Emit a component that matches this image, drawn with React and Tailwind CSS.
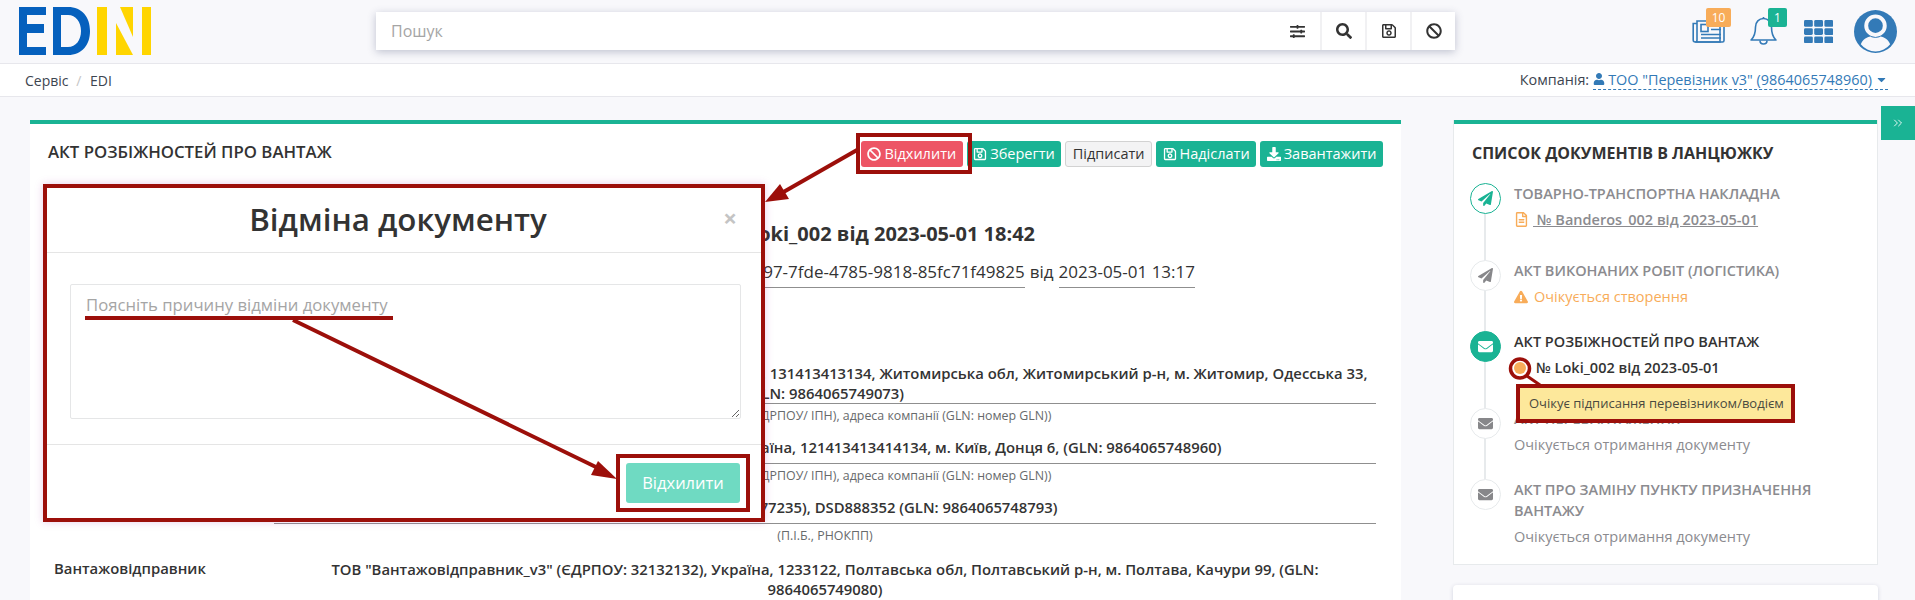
import React from 'react';
import { ChevronsRight } from 'lucide-react';
import {
  FaBan,
  FaCaretDown,
  FaDownload,
  FaEnvelope,
  FaExclamationTriangle,
  FaPaperPlane,
  FaRegFileAlt,
  FaRegSave,
  FaSearch,
  FaSlidersH,
  FaUser,
} from 'react-icons/fa';

const font = { fontFamily: '"Open Sans", sans-serif' };

function Logo() {
  return (
    <svg width="132" height="48" viewBox="0 0 132 48" className="ml-[19px] mt-[7px] shrink-0">
      <path d="M0 0H27V8H8V17H25V26H8V40H27V48H0Z" fill="#0560bd" />
      <path d="M34 0H49C63 0 71 10 71 24C71 38 63 48 49 48H34ZM42 8V40H49C57 40 62 33 62 24C62 15 57 8 49 8Z" fill="#0560bd" />
      <path d="M78 0H88V48H78Z" fill="#ffd500" />
      <path d="M101 0H114V30Z" fill="#ffd500" />
      <path d="M97 16L114 48H97Z" fill="#ffd500" />
      <path d="M123 0H132V48H123Z" fill="#ffd500" />
    </svg>
  );
}

function NewsIcon() {
  return (
    <svg width="33" height="23" viewBox="0 0 33 23" fill="none" stroke="#337ab7" strokeWidth="1.6">
      <path d="M5 3.5H1.2V20C1.2 21.2 2 22 3.2 22H30.5C31.4 22 32 21.4 32 20.5V3.5" />
      <path d="M5 1H28V22H3.2C4.4 22 5 21 5 20Z" />
      <rect x="9" y="4.5" width="7" height="7" />
      <path d="M19 6H29M19 9.5H29M9 14.5H29M9 18H29" />
    </svg>
  );
}

function BellIcon() {
  return (
    <svg width="27" height="29" viewBox="0 0 27 29" fill="none" stroke="#337ab7" strokeWidth="1.6">
      <path d="M1 24C3 22 5.5 20 5.5 11C5.5 6 9 2.5 13.5 2.5C18 2.5 21.5 6 21.5 11C21.5 20 24 22 26 24Z" strokeLinejoin="round" />
      <path d="M13.5 2.5V1" />
      <path d="M10 24.5C10 27 11.5 28 13.5 28C15.5 28 17 27 17 24.5" />
    </svg>
  );
}

function AppsIcon() {
  const cells = [];
  for (let y = 0; y < 3; y++) {
    for (let x = 0; x < 3; x++) {
      cells.push(<rect key={`${x}-${y}`} x={x * 10.2} y={y * 8.2} width="8.8" height="6.8" rx="1.4" fill="#337ab7" />);
    }
  }
  return (
    <svg width="29" height="23" viewBox="0 0 29 23" className="ml-[27px] mt-[20px]">
      {cells}
    </svg>
  );
}

function Avatar() {
  return (
    <svg width="43" height="43" viewBox="0 0 44 44" className="ml-[21px] mt-[10px]">
      <circle cx="22" cy="22" r="22" fill="#337ab7" />
      <circle cx="22" cy="16" r="9.5" fill="#337ab7" stroke="#f8f8fb" strokeWidth="4" />
      <path d="M7 35C9 30 13 27.5 17 27C20 29 24 29 27 27C31 27.5 35 30 37 35A19 19 0 0 1 7 35Z" fill="#f8f8fb" />
    </svg>
  );
}

function SearchBtn({ children }) {
  return <div className="flex w-[45px] items-center justify-center border-l-2 border-[#f1f1f3] text-[16px] text-[#333]">{children}</div>;
}

function Header() {
  return (
    <div className="flex h-[64px] border-b border-[#e7e7ec] bg-[#f8f8fb]">
      <Logo />
      <div className="ml-[225px] mt-[12px] flex h-[38px] w-[1079px] bg-white shadow-[0_2px_8px_rgba(60,70,110,0.3)]">
        <div className="flex-1 pl-[15px] text-[16px] leading-[38px] text-[#a5a5a5]">Пошук</div>
        <div className="flex w-[46px] items-center justify-center text-[15px] text-[#333]"><FaSlidersH /></div>
        <SearchBtn><FaSearch /></SearchBtn>
        <SearchBtn><FaRegSave /></SearchBtn>
        <SearchBtn><FaBan /></SearchBtn>
      </div>
      <div className="relative ml-[237px] mt-[20px] h-[23px]">
        <NewsIcon />
        <span className="absolute left-[14px] top-[-12px] h-[19px] w-[25px] rounded-[2px] bg-[#f8ac59] text-center text-[12px] leading-[19px] text-white">10</span>
      </div>
      <div className="relative ml-[25px] mt-[16px] h-[29px]">
        <BellIcon />
        <span className="absolute left-[18px] top-[-8px] h-[19px] w-[19px] rounded-[2px] bg-[#1ab394] text-center text-[12px] leading-[19px] text-white">1</span>
      </div>
      <AppsIcon />
      <Avatar />
    </div>
  );
}

function Breadcrumb() {
  return (
    <div className="flex h-[33px] items-center justify-between border-b border-[#e7e7ec] bg-white pl-[25px] pr-[27px] text-[14px] text-[#3d4550]">
      <div>
        Сервіс <span className="mx-[4px] text-[#c5c5c5]">/</span> <span className="ml-[1px]">EDI</span>
      </div>
      <div className="flex items-center gap-[4px] text-[14.4px]">
        <span>Компанія:</span>
        <span className="flex items-center border-b border-dashed border-[#337ab7] leading-[19px] text-[#337ab7]">
          <FaUser className="mr-[3px] text-[12px]" />
          ТОО "Перевізник v3" (9864065748960)
          <FaCaretDown className="ml-[3px] text-[13px]" />
        </span>
      </div>
    </div>
  );
}

function DocBtn({ icon, color, children }) {
  return (
    <button className={`flex h-[26px] items-center gap-[3px] rounded-[3px] px-[6.5px] text-[14.5px] ${color}`}>
      {icon}
      {children}
    </button>
  );
}

function PartyRow({ label, value, hint, className = '' }) {
  return (
    <div className={`flex text-[14.85px] ${className}`}>
      <div className="mt-[-1px] w-[220px] shrink-0 font-semibold leading-[20px] text-[#333]">{label}</div>
      <div className="w-[1102px]">
        <div className={`min-h-[27px] px-[6px] text-center font-semibold leading-[20px] text-[#333] ${hint ? 'border-b border-[#8f8f8f]' : ''}`}>{value}</div>
        {hint && <div className="mb-[12px] pt-[3px] text-center text-[12.4px] leading-[18px] text-[#676a6c]">{hint}</div>}
      </div>
    </div>
  );
}

function DocCard() {
  return (
    <div className="h-[500px] w-[1371px] shrink-0 overflow-hidden border-t-[4px] border-[#1ab394] bg-white">
      <div className="flex justify-between px-[18px] pt-[17px]">
        <div className="text-[16.8px] font-semibold leading-[22px] text-[#333]">АКТ РОЗБІЖНОСТЕЙ ПРО ВАНТАЖ</div>
        <div className="flex gap-[4px]">
          <DocBtn color="bg-[#ed5565] text-white" icon={<FaBan className="text-[14px]" />}>Відхилити</DocBtn>
          <DocBtn color="bg-[#1ab394] text-white" icon={<FaRegSave className="text-[14px]" />}>Зберегти</DocBtn>
          <DocBtn color="border border-[#d2d2d2] bg-[#f3f3f4] text-[#333]">Підписати</DocBtn>
          <DocBtn color="bg-[#1ab394] text-white" icon={<FaRegSave className="text-[14px]" />}>Надіслати</DocBtn>
          <DocBtn color="bg-[#1ab394] text-white" icon={<FaDownload className="text-[14px]" />}>Завантажити</DocBtn>
        </div>
      </div>
      <div className="mt-[53px] flex justify-end whitespace-nowrap pr-[366px] text-[20px] font-bold leading-[28px] text-[#333]">
        АКТ РОЗБІЖНОСТЕЙ ПРО ВАНТАЖ № Loki_002 від 2023-05-01 18:42
      </div>
      <div className="mt-[11px] flex justify-end whitespace-nowrap pr-[206px] text-[17px] leading-[26px] text-[#333]">
        <span className="border-b border-[#8f8f8f] pb-[2px]">до договору № 5b0e3c97-7fde-4785-9818-85fc71f49825</span>
        <span className="mx-[5px]">від</span>
        <span className="border-b border-[#8f8f8f] pb-[2px]">2023-05-01 13:17</span>
      </div>
      <div className="mt-[75px] pl-[24px]">
        <PartyRow
          label="Перевізник"
          value={
            <>
              ТОВ "Замовник-Експедитор_v3" (ЄДРПОУ: 31313131313), Україна, 131413413134, Житомирська обл, Житомирський р-н, м. Житомир, Одесська 33,
              <br />
              (GLN: 9864065749073)
            </>
          }
          hint="(найменування компанії (ЄДРПОУ/ ІПН), адреса компанії (GLN: номер GLN))"
        />
        <PartyRow
          label="Замовник"
          value={'ТОО "Перевізник v3" (ЄДРПОУ: 1214134), Україна, 121413413414134, м. Київ, Донця 6, (GLN: 9864065748960)'}
          hint="(найменування компанії (ЄДРПОУ/ ІПН), адреса компанії (GLN: номер GLN))"
        />
        <PartyRow
          label="Водій"
          value="Водій Тестовий (2877777235), DSD888352 (GLN: 9864065748793)"
          hint="(П.І.Б., РНОКПП)"
        />
        <PartyRow
          className="mt-[2px]"
          label="Вантажовідправник"
          value={'ТОВ "Вантажовідправник_v3" (ЄДРПОУ: 32132132), Україна, 1233122, Полтавська обл, Полтавський р-н, м. Полтава, Качури 99, (GLN: 9864065749080)'}
        />
      </div>
    </div>
  );
}

function ChainItem({ icon, tone, pb, last, children }) {
  const circle = {
    active: 'bg-[#1ab394] text-white border-[#1ab394]',
    done: 'bg-white text-[#1ab394] border-[#1ab394]',
    idle: 'bg-white text-[#87878a] border-[#e7eaec]',
  }[tone];
  return (
    <div className={`relative flex ${pb}`}>
      {!last && <div className="absolute bottom-0 left-[14px] top-0 w-[2px] bg-[#e7eaec]" />}
      <div className={`relative flex h-[31px] w-[31px] shrink-0 items-center justify-center rounded-full border text-[15px] ${circle}`}>{icon}</div>
      <div className="ml-[13px] leading-[21px]">{children}</div>
    </div>
  );
}

function ChainTitle({ dark, children }) {
  return <div className={`font-semibold ${dark ? 'text-[#333]' : 'text-[#8b8b8f]'}`}>{children}</div>;
}

function ChainCard() {
  return (
    <div className="w-[425px] shrink-0">
      <div className="h-[445px] border border-t-0 border-[#e7eaec] bg-white">
        <div className="h-[4px] bg-[#1ab394]" />
        <div className="pl-[18px] pt-[18px] text-[16px] font-bold leading-[22px] text-[#333]">СПИСОК ДОКУМЕНТІВ В ЛАНЦЮЖКУ</div>
        <div className="pl-[16px] pr-[20px] pt-[19px] text-[14.5px]">
          <ChainItem tone="done" pb="pb-[30px]" icon={<FaPaperPlane />}>
            <ChainTitle>ТОВАРНО-ТРАНСПОРТНА НАКЛАДНА</ChainTitle>
            <div className="mt-[5px] flex items-center font-semibold text-[#8b8b8f]">
              <FaRegFileAlt className="mr-[4px] text-[15px] text-[#f8ac59]" />
              <span className="underline">&nbsp;№ Banderos_002 від 2023-05-01</span>
            </div>
          </ChainItem>
          <ChainItem tone="idle" pb="pb-[24px]" icon={<FaPaperPlane />}>
            <ChainTitle>АКТ ВИКОНАНИХ РОБІТ (ЛОГІСТИКА)</ChainTitle>
            <div className="mt-[5px] flex items-center text-[#f8ac59]">
              <FaExclamationTriangle className="mr-[6px] text-[14px]" />
              Очікується створення
            </div>
          </ChainItem>
          <ChainItem tone="active" pb="pb-[30px]" icon={<FaEnvelope />}>
            <ChainTitle dark>АКТ РОЗБІЖНОСТЕЙ ПРО ВАНТАЖ</ChainTitle>
            <div className="mt-[5px] flex items-center font-semibold text-[#333]">
              <span className="mr-[10px] h-[12px] w-[12px] rounded-full bg-[#f8ac59]" />
              № Loki_002 від 2023-05-01
            </div>
          </ChainItem>
          <ChainItem tone="idle" pb="pb-[24px]" icon={<FaEnvelope />}>
            <ChainTitle>АКТ ПЕРЕВАНТАЖЕННЯ</ChainTitle>
            <div className="mt-[5px] text-[#8b8b8f]">Очікується отримання документу</div>
          </ChainItem>
          <ChainItem tone="idle" last pb="pb-0" icon={<FaEnvelope />}>
            <ChainTitle>АКТ ПРО ЗАМІНУ ПУНКТУ ПРИЗНАЧЕННЯ ВАНТАЖУ</ChainTitle>
            <div className="mt-[5px] text-[#8b8b8f]">Очікується отримання документу</div>
          </ChainItem>
        </div>
      </div>
      <div className="mt-[20px] h-[40px] rounded-[4px] bg-white shadow-[0_1px_4px_rgba(60,70,110,0.2)]" />
    </div>
  );
}

function RejectModal() {
  return (
    <div className="absolute left-[43px] top-[184px] flex h-[338px] w-[722px] flex-col border-[4px] border-[#9c0f0a] bg-white shadow-[0_0_8px_rgba(170,60,170,0.25)]">
      <div className="relative h-[65px] border-b border-[#e5e5e5] pr-[12px] text-center text-[31.3px] font-semibold leading-[62px] text-[#333]">
        Відміна документу
        <span className="absolute right-[24px] top-[15px] text-[24px] font-bold leading-[30px] text-[#c4c4c4]">×</span>
      </div>
      <div className="h-[191px] px-[23px] pt-[31px]">
        <textarea
          readOnly
          placeholder="Поясніть причину відміни документу"
          className="h-[135px] w-[671px] rounded-[2px] border border-[#e5e6e7] px-[15px] pb-[6px] pt-[8px] text-[16.7px] leading-[24px] outline-none placeholder:text-[#a5a5a5]"
        />
      </div>
      <div className="flex flex-1 items-start justify-end border-t border-[#e5e5e5] pr-[11px] pt-[9px]">
        <div className="flex h-[58px] w-[134px] items-center justify-center border-[4px] border-[#9c0f0a]">
          <button className="h-[40px] w-[114px] rounded-[3px] bg-[#6fdac2] text-[16.5px] text-white">Відхилити</button>
        </div>
      </div>
    </div>
  );
}

// червоні рамки та стрілки поверх сторінки
function Annotations() {
  return (
    <>
      <div className="absolute left-[856px] top-[133px] h-[41px] w-[116px] border-[4px] border-[#9c0f0a]" />
      <div className="absolute left-[85px] top-[316px] z-10 h-[4px] w-[308px] bg-[#9c0f0a]" />
      <div className="absolute left-[1516px] top-[384px] flex h-[39px] w-[279px] items-center border-[4px] border-[#9c0f0a] bg-[#fde89b] pl-[9px] text-[13px] text-[#4a4a40]">
        Очікує підписання перевізником/водієм
      </div>
      <svg className="pointer-events-none absolute left-0 top-0 z-10" width="1915" height="600">
        <line x1="857" y1="150" x2="780" y2="194" stroke="#9c0f0a" strokeWidth="4" />
        <polygon points="765,202 780,184 789,199" fill="#9c0f0a" />
        <line x1="293" y1="320" x2="600" y2="469" stroke="#9c0f0a" strokeWidth="4" />
        <polygon points="617,479 598,461 591,475" fill="#9c0f0a" />
        <circle cx="1520" cy="368.5" r="9.5" fill="none" stroke="#9c0f0a" strokeWidth="3.5" />
        <line x1="1527" y1="376" x2="1540" y2="385" stroke="#9c0f0a" strokeWidth="3" />
      </svg>
    </>
  );
}

export default function App() {
  return (
    <div className="relative h-[600px] overflow-hidden bg-[#f8f8fb]" style={font}>
      <Header />
      <Breadcrumb />
      <div className="flex gap-[52px] pl-[30px] pt-[23px]">
        <DocCard />
        <ChainCard />
      </div>
      <div className="absolute right-0 top-[106px] flex h-[34px] w-[34px] items-center justify-center bg-[#1ab394] text-white">
        <ChevronsRight size={14} strokeWidth={1.5} />
      </div>
      <RejectModal />
      <Annotations />
    </div>
  );
}
